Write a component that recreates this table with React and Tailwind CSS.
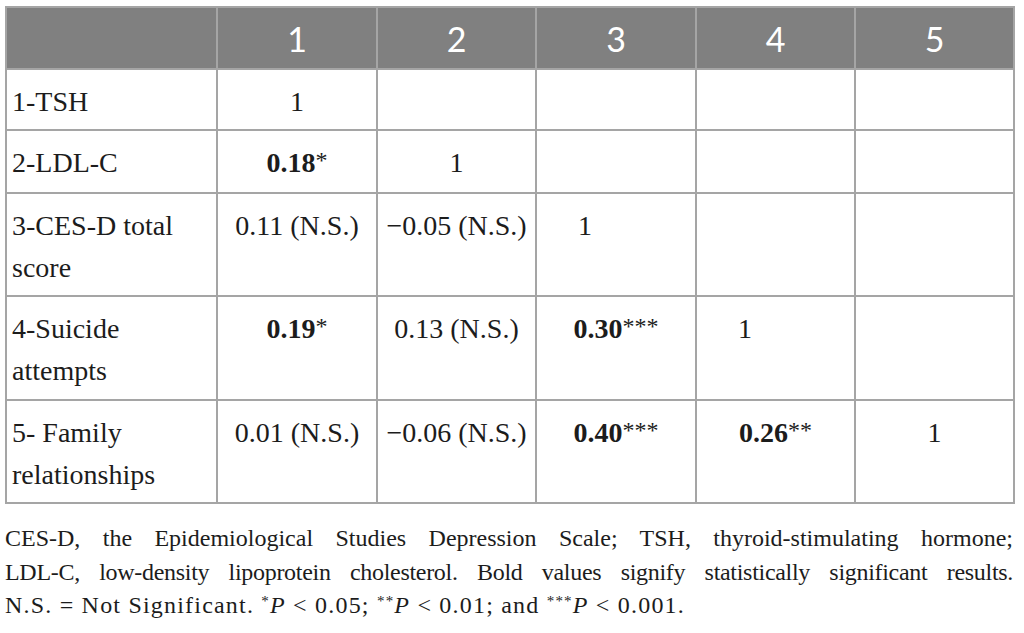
const header = ["", "1", "2", "3", "4", "5"];

const Sig = ({ v, s }) => (
  <span>
    <span className="font-bold">{v}</span>
    <span className="font-normal text-[24px] relative top-[-4px]">{s}</span>
  </span>
);

const rows = [
  ["1-TSH", { c: "1" }, null, null, null, null],
  ["2-LDL-C", { c: <Sig v="0.18" s="*" /> }, { c: "1" }, null, null, null],
  ["3-CES-D total score", { c: "0.11 (N.S.)" }, { c: "\u22120.05 (N.S.)" }, { l: "1" }, null, null],
  ["4-Suicide attempts", { c: <Sig v="0.19" s="*" /> }, { c: "0.13 (N.S.)" }, { c: <Sig v="0.30" s="***" /> }, { l: "1" }, null],
  [
    "5- Family relationships",
    { c: "0.01 (N.S.)" },
    { c: "\u22120.06 (N.S.)" },
    { c: <Sig v="0.40" s="***" /> },
    { c: <Sig v="0.26" s="**" /> },
    { c: "1" },
  ],
];

export default function App() {
  return (
    <div className="w-[1024px] h-[633px] bg-white pt-[6px] pl-[5px] overflow-hidden">
      <table className="border-collapse table-fixed w-[1008px] border-2 border-[#a5a5a5]">
        <colgroup>
          <col className="w-[211px]" />
          <col className="w-[160px]" />
          <col className="w-[159px]" />
          <col className="w-[160px]" />
          <col className="w-[159px]" />
          <col className="w-[159px]" />
        </colgroup>
        <thead>
          <tr className="bg-[#808080] h-[62px]">
            {header.map((h, i) => (
              <th
                key={i}
                className="border-2 border-[#a5a5a5] text-white font-normal text-[34px] text-center align-middle font-['Lato',sans-serif]"
              >
                {h}
              </th>
            ))}
          </tr>
        </thead>
        <tbody className="font-['Liberation_Serif',serif] text-[28px] leading-[42.25px] text-[#1c1c1c]">
          {rows.map((r, i) => (
            <tr key={i}>
              <td className="border-2 border-[#a5a5a5] align-top pt-[11px] pb-[6px] pl-[5px] pr-[4px]">
                {r[0]}
              </td>
              {r.slice(1).map((cell, j) => (
                <td
                  key={j}
                  className={
                    cell && cell.l
                      ? "border-2 border-[#a5a5a5] align-top pt-[11px] pb-[6px] pl-[41px] text-left whitespace-nowrap"
                      : "border-2 border-[#a5a5a5] align-top pt-[11px] pb-[6px] px-[2px] text-center whitespace-nowrap"
                  }
                >
                  {cell ? cell.c || cell.l : ""}
                </td>
              ))}
            </tr>
          ))}
        </tbody>
      </table>

      <div className="w-[1008px] mt-[18px] font-['Liberation_Serif',serif] text-[24px] leading-[33.5px] text-[#1c1c1c]">
        <div className="text-justify [text-align-last:justify] whitespace-nowrap">
          CES-D, the Epidemiological Studies Depression Scale; TSH, thyroid-stimulating hormone;
        </div>
        <div className="text-justify [text-align-last:justify] whitespace-nowrap tracking-[-0.3px]">
          LDL-C, low-density lipoprotein cholesterol. Bold values signify statistically significant results.
        </div>
        <div className="tracking-[1.2px] whitespace-nowrap">
          N.S. = Not Significant. <sup className="text-[15px]">*</sup>
          <i>P</i> &lt; 0.05; <sup className="text-[15px]">**</sup>
          <i>P</i> &lt; 0.01; and <sup className="text-[15px]">***</sup>
          <i>P</i> &lt; 0.001.
        </div>
      </div>
    </div>
  );
}
